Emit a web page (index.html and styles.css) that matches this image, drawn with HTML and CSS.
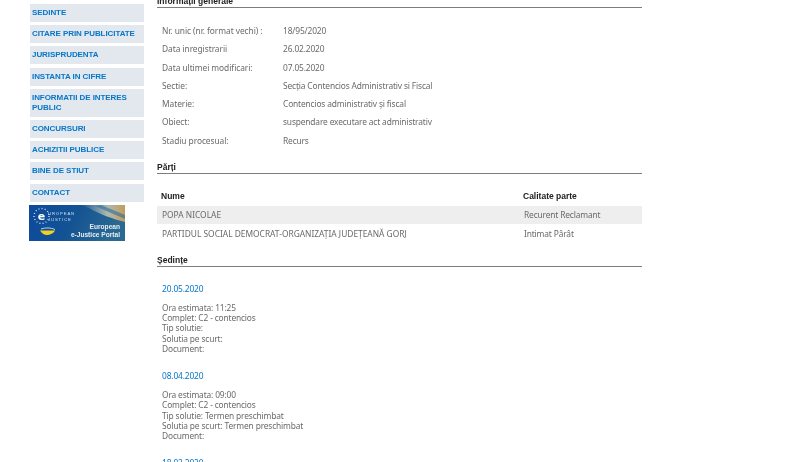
FILE: index.html
```html
<!DOCTYPE html>
<html lang="ro">
<head>
<meta charset="utf-8">
<title>Dosar</title>
<link rel="stylesheet" href="styles.css">
</head>
<body>
<div class="page">
  <nav class="side">
    <a class="item" href="#">SEDINTE</a>
    <a class="item" href="#">CITARE PRIN PUBLICITATE</a>
    <a class="item" href="#">JURISPRUDENTA</a>
    <a class="item" href="#">INSTANTA IN CIFRE</a>
    <a class="item" href="#">INFORMATII DE INTERES PUBLIC</a>
    <a class="item" href="#">CONCURSURI</a>
    <a class="item" href="#">ACHIZITII PUBLICE</a>
    <a class="item" href="#">BINE DE STIUT</a>
    <a class="item" href="#">CONTACT</a>
    <svg class="banner" viewBox="0 0 96 36" width="96" height="36">
      <defs>
        <linearGradient id="bg" x1="0" y1="0" x2="1" y2="0.2">
          <stop offset="0" stop-color="#0c4a9c"/>
          <stop offset="0.5" stop-color="#135293"/>
          <stop offset="1" stop-color="#2a6a92"/>
        </linearGradient>
        <linearGradient id="glow" x1="0" y1="0" x2="1" y2="0">
          <stop offset="0" stop-color="#b7c6c0" stop-opacity="0"/>
          <stop offset="0.6" stop-color="#c4c8b4" stop-opacity="0.85"/>
          <stop offset="1" stop-color="#c39a58"/>
        </linearGradient>
      </defs>
      <rect width="96" height="36" fill="url(#bg)"/>
      <path d="M52 0H96V17C84 14 70 9 60 3Z" fill="url(#glow)"/>
      <path d="M72 0L96 10V14L66 1Z" fill="#2c6c9c" opacity="0.6"/>
      <circle cx="12.5" cy="11" r="7.5" fill="none" stroke="#d6e4f2" stroke-width="1.3" stroke-dasharray="1 2.2"/>
      <text class="b-e" x="12.5" y="14.5">e</text>
      <text class="b-small" x="19" y="9.5">UROPEAN</text>
      <text class="b-small" x="19" y="15.5">JUSTICE</text>
      <path d="M11 25.5H26C24 29 20 30 18 30C15 30 12.5 28 11 25.5Z" fill="#f2d21f"/>
      <path d="M12 24C16 22.5 22 22.5 26 24.5" fill="none" stroke="#b5cfe6" stroke-width="1"/>
      <text class="b-big" x="91" y="24">European</text>
      <text class="b-big" x="91" y="32">e-Justice Portal</text>
    </svg>
  </nav>

  <main class="main">
    <h2 class="heading">Informații generale</h2>
    <div class="info">
      <div class="info-row"><span class="lab">Nr. unic (nr. format vechi) :</span><span>18/95/2020</span></div>
      <div class="info-row"><span class="lab">Data inregistrarii</span><span>26.02.2020</span></div>
      <div class="info-row"><span class="lab">Data ultimei modificari:</span><span>07.05.2020</span></div>
      <div class="info-row"><span class="lab">Sectie:</span><span>Secția Contencios Administrativ si Fiscal</span></div>
      <div class="info-row"><span class="lab">Materie:</span><span>Contencios administrativ și fiscal</span></div>
      <div class="info-row"><span class="lab">Obiect:</span><span>suspendare executare act administrativ</span></div>
      <div class="info-row"><span class="lab">Stadiu procesual:</span><span>Recurs</span></div>
    </div>

    <h2 class="heading heading-parti">Părți</h2>
    <div class="parties">
      <div class="p-row p-head"><span>Nume</span><span>Calitate parte</span></div>
      <div class="p-row p-alt"><span class="caps">POPA NICOLAE</span><span>Recurent Reclamant</span></div>
      <div class="p-row p-last"><span class="caps">PARTIDUL SOCIAL DEMOCRAT-ORGANIZAȚIA JUDEȚEANĂ GORJ</span><span>Intimat Pârât</span></div>
    </div>

    <h2 class="heading heading-sed">Ședințe</h2>
    <section class="session">
      <a class="date" href="#">20.05.2020</a>
      <div class="lines">Ora estimata: 11:25<br>Complet: C2 - contencios<br>Tip solutie:<br>Solutia pe scurt:<br>Document:</div>
    </section>
    <section class="session">
      <a class="date" href="#">08.04.2020</a>
      <div class="lines">Ora estimata: 09:00<br>Complet: C2 - contencios<br>Tip solutie: Termen preschimbat<br>Solutia pe scurt: Termen preschimbat<br>Document:</div>
    </section>
    <section class="session">
      <a class="date" href="#">18.03.2020</a>
    </section>
  </main>
</div>
</body>
</html>
```
FILE: styles.css
```css
html, body {
  margin: 0;
  padding: 0;
  height: 462px;
  overflow: hidden;
  background: #fff;
}
.page {
  display: flex;
  align-items: flex-start;
  margin-top: -4px;
  padding-left: 30px;
  font-family: "Noto Sans", sans-serif;
  font-size: 8.4px;
  letter-spacing: -0.15px;
  color: #6a6a6a;
  filter: blur(0.25px);
}
.side {
  width: 114px;
  flex: none;
  display: flex;
  flex-direction: column;
  padding-top: 8px;
}
.item {
  display: block;
  background: #e3e8ee;
  padding: 4px 0 4px 2px;
  margin-bottom: 3.2px;
  font-family: "Liberation Sans", sans-serif;
  font-weight: 700;
  font-size: 8px;
  letter-spacing: -0.07px;
  line-height: 10px;
  color: #0576c8;
  text-decoration: none;
}
.banner {
  display: block;
  margin-left: -1px;
}
.main {
  width: 485px;
  margin-left: 13px;
}
.heading {
  margin: 0;
  padding: 0 0 1px;
  border-bottom: 1px solid #7d7d7d;
  font-family: "Liberation Sans", sans-serif;
  font-size: 8.5px;
  letter-spacing: 0;
  font-weight: 700;
  line-height: 10px;
  color: #222;
}
.info {
  padding: 14px 0 0 5px;
}
.info-row {
  display: flex;
  height: 18.3px;
  line-height: 18.3px;
}
.lab {
  width: 121px;
  flex: none;
  letter-spacing: -0.06px;
}
.heading-parti {
  margin-top: 12px;
}
.parties {
  padding-top: 13px;
}
.p-row {
  display: flex;
  height: 18px;
  line-height: 18px;
  padding-left: 5px;
}
.p-row span:first-child {
  width: 362px;
  flex: none;
}
.caps {
  letter-spacing: 0;
}
.p-head {
  height: 19px;
  font-family: "Liberation Sans", sans-serif;
  font-weight: 700;
  font-size: 8.5px;
  letter-spacing: 0;
  color: #222;
  padding-left: 4px;
}
.p-alt {
  background: #eeeeee;
}
.p-last {
  height: 20px;
  line-height: 20px;
}
.heading-sed {
  margin-top: 11px;
}
.session {
  padding: 14px 0 0 5px;
}
.date {
  display: block;
  color: #0576c8;
  text-decoration: none;
  line-height: 16px;
  margin-bottom: 6px;
}
.lines {
  line-height: 10.2px;
}
.b-e { font: 700 11px "DejaVu Sans", sans-serif; fill: #fff; text-anchor: middle; letter-spacing: 0; }
.b-small { font: 4.2px "Liberation Sans", sans-serif; fill: #cfe0f2; letter-spacing: 0.9px; }
.b-big { font: 700 6.6px "Liberation Sans", sans-serif; fill: #e8edf2; text-anchor: end; letter-spacing: 0; }
```
